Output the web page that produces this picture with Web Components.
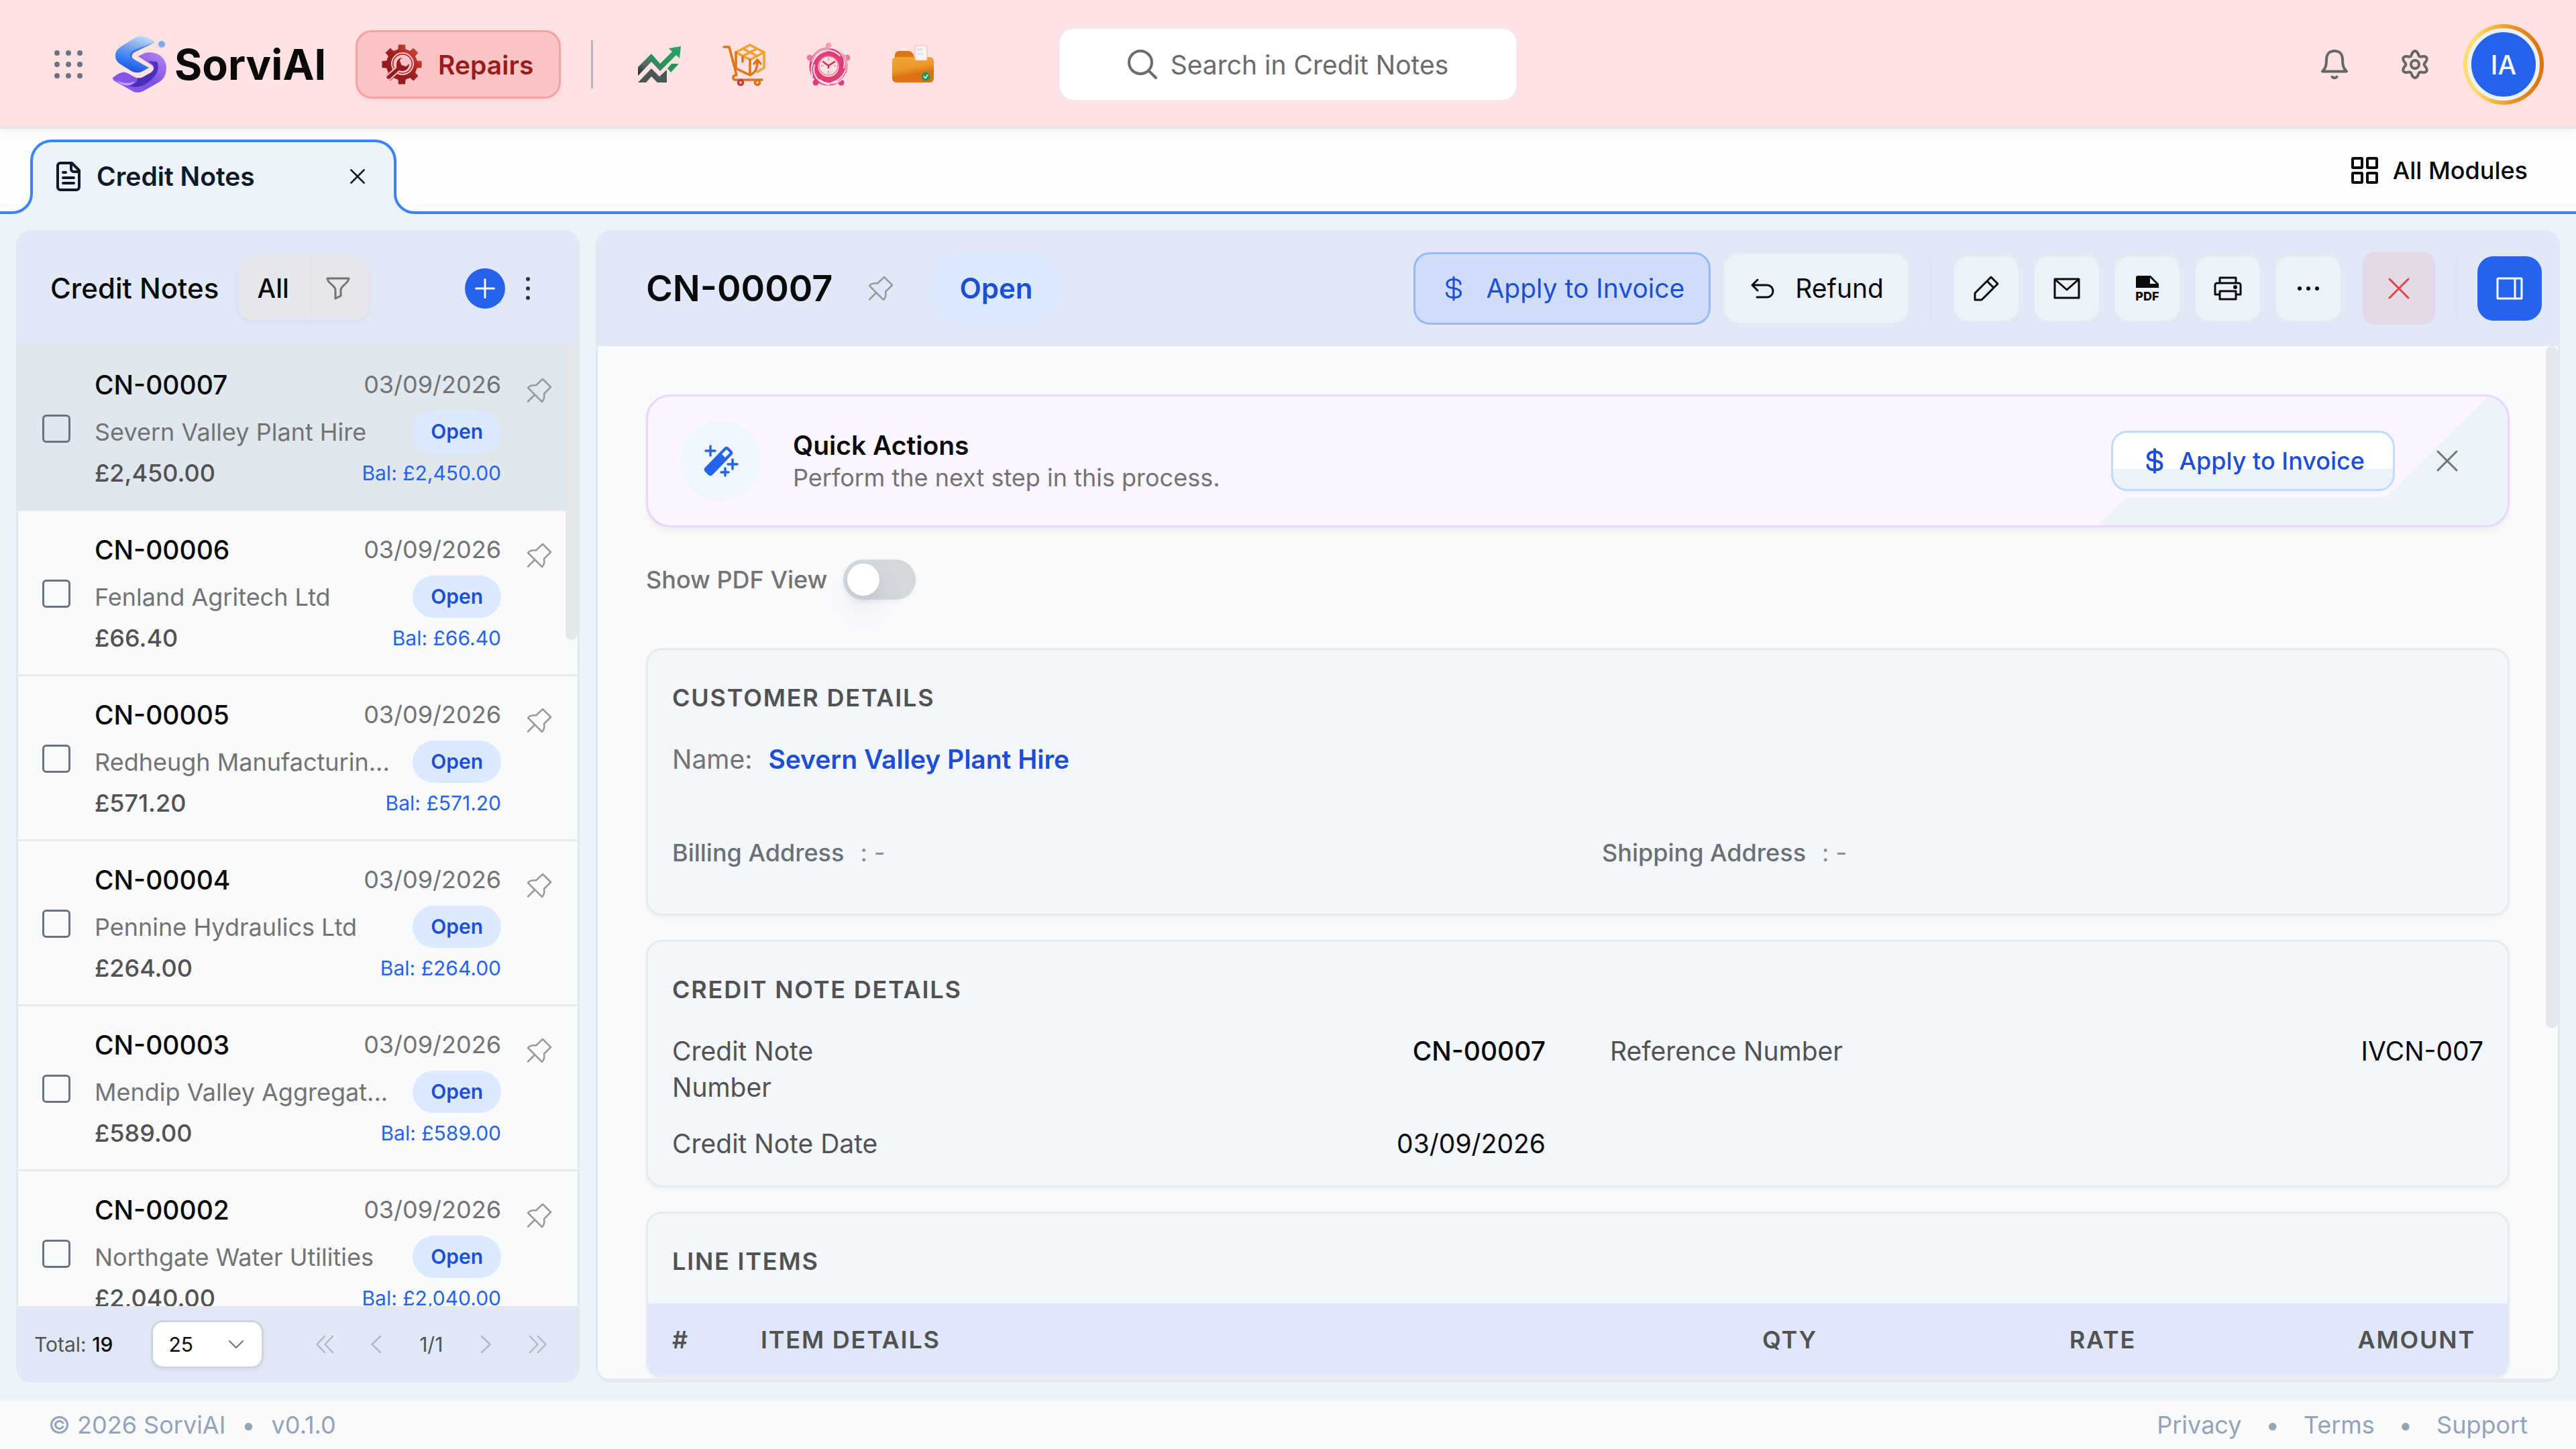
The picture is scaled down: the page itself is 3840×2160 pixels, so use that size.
<!DOCTYPE html>
<html lang="en">
<head>
<meta charset="utf-8">
<title>Credit Notes · SorviAI</title>
<style>
  html, body { margin: 0; height: 100%; }
  body { font-family: Inter, "Liberation Sans", sans-serif; color: #0a0a0a; background: #ebf2fa; overflow: hidden; }
</style>
</head>
<body>
<sorvi-app></sorvi-app>

<script>
/* Outline path for a gear: lobes around a centre, as a smooth polar curve. */
function lobes(cx, cy, mid, amp) {
  let d = '';
  for (let i = 0; i < 120; i++) {
    const a = i / 120 * Math.PI * 2;
    const r = mid + amp * Math.cos(6 * (a - Math.PI / 2));
    d += (i ? 'L' : 'M') + (cx + r * Math.cos(a)).toFixed(2) + ' ' + (cy + r * Math.sin(a)).toFixed(2);
  }
  return d + 'Z';
}
/* Outline of a toothed wheel with eight square teeth. */
function cog(cx, cy, inner, outer) {
  let d = '';
  for (let i = 0; i < 8; i++) {
    const c = i * Math.PI / 4;
    [[-0.24, inner], [-0.17, outer], [0.17, outer], [0.24, inner]].forEach(([o, r], k) => {
      d += (i || k ? 'L' : 'M') + (cx + r * Math.cos(c + o)).toFixed(2) + ' ' + (cy + r * Math.sin(c + o)).toFixed(2);
    });
  }
  return d + 'Z';
}

/* name: [width, height, markup, stroke width] */
const ICONS = {
  dots: [42, 42, [4, 21, 38].map(y => [4, 21, 38].map(x => `<circle cx="${x}" cy="${y}" r="4" fill="currentColor" stroke="none"/>`).join('')).join(''), 0],
  search: [44, 44, '<circle cx="19" cy="19" r="17"/><path d="M31.5 31.5 42 42"/>', 4],
  bell: [40, 44, '<path d="M20 2C11.500 2 8 8 8 15 8 24 6.500 28 2 32.500H38C33.500 28 32 24 32 15 32 8 28.500 2 20 2Z"/><path d="M16.500 40.500q3.500 3.500 7 0"/>', 4],
  settings: [40, 44, `<path d="${lobes(20, 22, 16.8, 3.2)}"/><circle cx="20" cy="22" r="6"/>`, 4],
  doc: [36, 44, '<path d="M6 2H23L34 13V38a4 4 0 0 1-4 4H6a4 4 0 0 1-4-4V6a4 4 0 0 1 4-4Z"/><path d="M22 2v9a4 4 0 0 0 4 4h8M10 16h4M10 24h16M10 32h16"/>', 4],
  close: [32, 32, '<path d="M2 2 30 30M30 2 2 30"/>', 3],
  grid: [40, 40, '<rect x="2" y="2" width="14" height="14" rx="1"/><rect x="24" y="2" width="14" height="14" rx="1"/><rect x="2" y="24" width="14" height="14" rx="1"/><rect x="24" y="24" width="14" height="14" rx="1"/>', 4],
  filter: [36, 34, '<path d="M2 2H34C34 9 22 13 22 19V28L14 32V19C14 13 2 9 2 2Z"/>', 3],
  plus: [30, 30, '<path d="M15 1.500V28.500M1.500 15H28.500"/>', 3],
  kebab: [8, 36, '<g fill="currentColor" stroke="none"><circle cx="4" cy="4" r="3"/><circle cx="4" cy="18" r="3"/><circle cx="4" cy="32" r="3"/></g>', 0],
  more: [34, 8, '<g fill="currentColor" stroke="none"><circle cx="4" cy="4" r="3"/><circle cx="17" cy="4" r="3"/><circle cx="30" cy="4" r="3"/></g>', 0],
  pin: [38, 38, '<path d="M24 2 36 14 26 24C27 29 26 33 23 36L2 15C5 11.500 9.500 11 14 11.500ZM12 25.500 2 35.500"/>', 2.5],
  dollar: [24, 36, '<path d="M12 1V35M22 11.500C22 7 18 4.500 12 4.500S2 7 2 11.500 6 17 12 17.800 22.500 20.500 22.500 25 18 31.500 12 31.500 1.500 29 1.500 24.500"/>', 3],
  undo: [36, 30, '<path d="M10 2 2 10 10 18M2 10H24a9 9 0 0 1 0 18H9"/>', 3],
  pencil: [38, 38, '<path d="M26 2 36 12 12 36H2V26ZM20 8 30 18"/>', 3],
  mail: [40, 32, '<path d="M2 2H38V30H2ZM3 3 20 18 37 3"/>', 3],
  printer: [42, 36, '<path d="M9 10V2H33V10M9 27H2V13a3 3 0 0 1 3-3H37a3 3 0 0 1 3 3V27H33M9 22H33V34H9Z"/><circle cx="32" cy="16" r="1.500" fill="currentColor"/>', 3],
  pdf: [36, 38, '<path d="M4 0H23L35 12V18H1V3a3 3 0 0 1 3-3Z" fill="currentColor" stroke="none"/><path d="M22 3V12H31Z" fill="#ebf2fa" stroke="none"/><text x="18" y="37" text-anchor="middle" font-family="Inter" font-size="18" font-weight="800" fill="currentColor" stroke="none">PDF</text>', 0],
  panel: [40, 34, '<rect x="2" y="2" width="36" height="30" rx="1"/><path d="M28 2V32"/>', 3],
  wand: [52, 46, '<path d="M32 3a4 4 0 0 1 6 0l5 5a4 4 0 0 1 0 6L14 44a4 4 0 0 1-6 0L3 39a4 4 0 0 1 0-6Z" fill="currentColor" stroke="none"/><path d="M28 13 35 6 40 11 33 18Z" fill="#eff6ff" stroke="none"/><path d="M11 1V15M4 8H18M44 21V35M37 28H51M33 34V45M27 40H38"/>', 3.5],
  chevdown: [22, 12, '<path d="M1 1 11 11 21 1"/>', 2],
  first: [26, 26, '<path d="M13 1 1.500 13 13 25M25 1 13.500 13 25 25"/>', 2.5],
  prev: [15, 26, '<path d="M14 1 1.500 13 14 25"/>', 2.5],
  next: [15, 26, '<path d="M1 1 13.500 13 1 25"/>', 2.5],
  last: [26, 26, '<path d="M1 1 12.500 13 1 25M13 1 24.500 13 13 25"/>', 2.5],
  logo: [80, 84, `<defs>
      <linearGradient id="b" x1=".7" y1="0" x2=".4" y2="1"><stop offset="0" stop-color="#bfdbfe"/><stop offset=".35" stop-color="#7aa5ee"/><stop offset=".65" stop-color="#3b82f6"/><stop offset="1" stop-color="#1d4ed8"/></linearGradient>
      <linearGradient id="p" x1="1" y1="0" x2="0" y2="1"><stop offset="0" stop-color="#b48af5"/><stop offset=".5" stop-color="#7c4fe0"/><stop offset="1" stop-color="#8b5cf6"/></linearGradient></defs>
      <g stroke="none"><path d="M38 30C44 27 48 24 54 24 70 24 80 34 80 47 80 57 76 65 68 69L47 81C41 84.500 34 85 28 81L3 67C1 66 0 64 0 62 6 57 14 51 22 55L33 61C40 64 46 61 50 58L57 54C62 50 62 46 58 43Z" fill="url(#p)"/>
      <path d="M60 43C63 48 61 52 56 55L50 58C46 61 42 63 37 62.500 38 68 31 73 24 74 38 78 48 73 56 66 65 59 71 48 66 38L53 37Z" fill="#4326b0" opacity=".85"/>
      <path d="M3 64C12 70 24 72 33 67 30 73 20 75 12 71Z" fill="#c4a5fb"/>
      <path d="M63 9C58 4 50 0 42 0 38 0 35 1.500 32 3L13 15C7 19 4 23 4 29 4 35 7 39 12 42L28 52C34 55 40 55 45 52L54 47 31 34C27 31 28 27 32 24Z" fill="url(#b)"/>
      <path d="M63 9 32 24C28 27 27 31 31 34L33 36C27 34 23 28 28 23 30 21 33 20 36 19Z" fill="#2563eb" opacity=".7"/>
      <circle cx="73" cy="12" r="5" fill="#7aaaf5"/></g>`, 0],
  repair: [60, 60, `<defs><linearGradient id="r" x1="1" y1="0" x2="0" y2="1"><stop offset="0" stop-color="#d9573f"/><stop offset=".45" stop-color="#a32121"/><stop offset=".8" stop-color="#8e1a1e"/><stop offset="1" stop-color="#4a3b40"/></linearGradient></defs>
      <g stroke="none"><path d="${cog(30, 30, 23.5, 30)}" fill="url(#r)"/><circle cx="31" cy="29" r="17" fill="#fbc4c4"/><circle cx="31" cy="29" r="15" fill="#a02024"/>
      <circle cx="31" cy="29" r="13.500" fill="#fbc4c4"/><path d="M33 18C26 19 21 23 21 29 21 32 21.500 33 21 35L7 47C5 51 9 54 13 52L26 40C34 43 43 38 42 27L36 32 30 30 28 24Z" fill="#97191d" stroke="#fbc4c4" stroke-width="2"/></g>`, 0],
  sales: [66, 56, `<defs><linearGradient id="s" x1="0" y1="1" x2="1" y2="0"><stop offset="0" stop-color="#1f2937"/><stop offset=".3" stop-color="#5b6b66"/><stop offset=".5" stop-color="#23955c"/><stop offset="1" stop-color="#2ba367"/></linearGradient></defs>
      <g stroke="none"><path d="M1 32 21 12 34 27 52 9 47 4 65 1 63 19 58 14 34 38 21 24 1 45Z" fill="url(#s)"/><path d="M1 55 21 34 33 46 44 36V55H30L21 46 13 55Z" fill="#4b5558"/><path d="M45 34 51 27H62L50 40Z" fill="#23955c"/></g>`, 0],
  cart: [64, 62, `<path d="M2 5H10L21 47C15 47 14 53 19 54H59" stroke="#dd7413"/><g stroke="#efa12d"><path d="M41 2 62 13V36L52 42M41 2 20 13 41 24 62 13M30.500 7.500 51.500 18.500M51.500 7.500 30.500 18.500"/></g><path d="M20 13V37L41 47C49 43 52 38 52 26M41 24V46M47 30 52 24 57 30M30 20V27" stroke="#dd7413"/><circle cx="27" cy="58" r="3.500" stroke="#c93a3a"/><circle cx="52" cy="58" r="3.500" stroke="#dd7413"/>`, 3.5],
  clock: [66, 66, `<g stroke="none" fill="#e77d99"><circle cx="33" cy="5" r="4.500" fill="#f3a1ab"/><circle cx="5" cy="23" r="4.500"/><circle cx="61" cy="23" r="4.500"/><circle cx="14" cy="60" r="4.500" fill="#e23b7a"/><circle cx="52" cy="60" r="4.500" fill="#e23b7a"/></g>
      <circle cx="33" cy="36" r="22" stroke="#e23b7a" stroke-width="13"/><g stroke="#fee2e2" stroke-width="2"><path d="M33 8C50 8 60 22 56 38M58 22C64 40 54 56 38 60M60 46C52 62 34 66 20 56M34 63C18 62 8 48 12 34M9 50C4 32 14 16 30 13M10 24C20 10 38 8 50 20"/></g>
      <path d="M8 28C12 16 22 9 34 9M56 22C60 28 61 36 59 43" stroke="#f09ab0" stroke-width="3"/><circle cx="33" cy="35" r="14" fill="#fee2e2" stroke="#e58a9c" stroke-width="1.500"/><path d="M25 29 33 35 42 29M33 35V38" stroke="#d02b55" stroke-width="2.500"/>
      <path d="M33 24v3M33 43v3M22 35h3M41 35h3" stroke="#e58a9c" stroke-width="1.500"/>`, 2],
  folder: [64, 58, `<defs><linearGradient id="f" x1="0" y1="0" x2=".3" y2="1"><stop offset="0" stop-color="#f0a535"/><stop offset=".5" stop-color="#ec9a2a"/><stop offset=".75" stop-color="#dd7413"/></linearGradient></defs>
      <g stroke="none"><path d="M5 22V15C5 11 8 9 12 9H25C30 9 33 13 34 19Z" fill="#dd7413"/><rect x="1" y="18" width="62" height="38" rx="6" fill="url(#f)"/><rect x="35" y="1" width="18" height="22" rx="2" fill="#fdf4ec" stroke="#f6b9b0" stroke-width="1"/><path d="M38 5h8v4h-8ZM38 12h10v3h-10Z" fill="#dbe7f0"/><circle cx="51" cy="47" r="6.500" fill="#23955c"/></g><path d="M48 47 50.500 49.500 54 44.500" stroke="#fff" stroke-width="1.500"/>`, 0]
};

function define(name, html, setup) {
  const tpl = document.createElement('template');
  tpl.innerHTML = '<style>*{box-sizing:border-box}button,input,select{font:inherit;color:inherit;margin:0}button{cursor:pointer}a{text-decoration:none;color:inherit}</style>' + html;
  customElements.define(name, class extends HTMLElement {
    connectedCallback() {
      if (this.shadowRoot) return;
      this.attachShadow({ mode: 'open' }).append(tpl.content.cloneNode(true));
      if (setup) setup(this, this.shadowRoot);
    }
  });
}

define('sv-icon', '<style>:host{display:block;flex:none}span,svg{display:block;overflow:visible}</style><span></span>', (el, root) => {
  const [w, h, body, sw] = ICONS[el.getAttribute('name')];
  const scale = Number(el.getAttribute('scale') || 1);
  const stroke = el.getAttribute('weight') || sw;
  root.querySelector('span').innerHTML =
    `<svg aria-hidden="true" width="${Math.round(w * scale)}" height="${Math.round(h * scale)}" viewBox="0 0 ${w} ${h}" fill="none" stroke="currentColor" stroke-width="${stroke}" stroke-linecap="round" stroke-linejoin="round">${body}</svg>`;
});

define('sv-button', `
<style>
  :host { display: block; flex: none; }
  button { display: flex; align-items: center; justify-content: center; gap: 24px; width: 100%; height: 102px; padding: 0; border: 3px solid transparent; border-radius: 24px; background: none; font-size: 39px; font-weight: 400; white-space: nowrap; }
  :host([kind=soft]) button { width: 102px; background: #ebf2fa; border-color: #e6eaee; }
  :host([kind=soft][wide]) button { width: auto; height: 108px; padding: 0 36px 0 39px; gap: 30px; }
  :host([kind=primary]) button { height: 108px; padding: 0 36px 0 45px; gap: 36px; background: #cfddf8; border-color: #97b7f6; color: #1d4ed8; }
  :host([kind=danger]) button { width: 108px; height: 108px; border-radius: 18px; background: #e4d9e6; color: #dc4444; }
  :host([kind=blue]) button { width: 96px; height: 96px; background: #2563eb; color: #fff; }
  :host([kind=outline]) button { height: 90px; padding: 0 42px 0 50px; gap: 24px; border-color: #bfdbfe; background: linear-gradient(#fff 64%, #ebf2fa 64%); color: #1d4ed8; font-size: 36px; font-weight: 500; }
  :host([kind=round]) button { width: 60px; height: 60px; border: 0; border-radius: 50%; background: #2563eb; color: #fff; }
  :host([kind=app]) button { height: 102px; padding: 0 38px 0 36px; gap: 24px; background: #fbc4c4; border-color: #f4a1a1; color: #991b1b; font-weight: 600; box-shadow: 0 3px 6px rgba(200,80,80,.08); }
  :host([kind=plain]) button { height: 96px; border: 0; }
</style>
<button type="button"><slot></slot></button>`, (el, root) => {
  if (el.hasAttribute('label')) root.querySelector('button').setAttribute('aria-label', el.getAttribute('label'));
});

define('sv-header', `
<style>
  :host { display: grid; grid-template-columns: 1fr 686px 1fr; align-items: center; height: 192px; flex: none; padding: 3px 48px 0; background: #fee2e2; border-bottom: 3px solid #e5e7eb; box-shadow: 0 3px 9px rgba(0,0,0,.05); box-sizing: border-box; position: relative; }
  .left, .right, .brand, .apps { display: flex; align-items: center; }
  .launch { width: 108px; color: #6b7280; margin-right: 12px; }
  .brand { gap: 12px; font-size: 63px; font-weight: 700; line-height: 84px; margin-right: 44px; }
  .rule { width: 3px; height: 72px; background: #b3b6bd; margin: 0 36px 0 45px; }
  .apps sv-button { width: 126px; }
  .search { display: flex; align-items: center; justify-content: center; gap: 20px; height: 112px; border: 3px solid #f3e9ec; border-radius: 24px; background: #fff; color: #6b6b6b; font-size: 39px; }
  input { field-sizing: content; border: 0; outline: 0; padding: 0; background: none; }
  input::placeholder { color: #6b6b6b; opacity: 1; }
  .right { justify-content: flex-end; gap: 24px; color: #666; }
  .right sv-button { width: 96px; }
  .ring { width: 120px; height: 120px; padding: 6px; border-radius: 50%; background: linear-gradient(90deg, #fddc70 15%, #f0a22e 50%, #dd7511 92%); }
  .ring button { display: block; width: 108px; height: 108px; padding: 0; border: 6px solid #ebf2fa; border-radius: 50%; background: #2563eb; color: #f8fafc; font-size: 39px; font-weight: 500; }
</style>
<div class="left">
  <sv-button kind="plain" class="launch" label="Apps"><sv-icon name="dots"></sv-icon></sv-button>
  <a class="brand" href="#"><sv-icon name="logo"></sv-icon><span>SorviAI</span></a>
  <sv-button kind="app"><sv-icon name="repair"></sv-icon><span>Repairs</span></sv-button>
  <div class="rule"></div>
  <nav class="apps">
    <sv-button kind="plain" label="Sales"><sv-icon name="sales"></sv-icon></sv-button>
    <sv-button kind="plain" label="Purchases"><sv-icon name="cart"></sv-icon></sv-button>
    <sv-button kind="plain" label="Time"><sv-icon name="clock"></sv-icon></sv-button>
    <sv-button kind="plain" label="Documents"><sv-icon name="folder"></sv-icon></sv-button>
  </nav>
</div>
<label class="search"><sv-icon name="search"></sv-icon><input type="text" aria-label="Search in Credit Notes" placeholder="Search in Credit Notes"></label>
<div class="right">
  <sv-button kind="plain" label="Notifications"><sv-icon name="bell"></sv-icon></sv-button>
  <sv-button kind="plain" label="Settings"><sv-icon name="settings"></sv-icon></sv-button>
  <div class="ring"><button type="button">IA</button></div>
</div>`);

define('sv-tabs', `
<style>
  :host { display: flex; align-items: flex-end; height: 127px; flex: none; background: #fcfdff; }
  .line { align-self: stretch; border-bottom: 4px solid #3b82f6; }
  .lead { width: 18px; }
  .fill { flex: 1; display: flex; align-items: center; justify-content: flex-end; padding-right: 72px; }
  svg { display: block; flex: none; }
  .tab { display: flex; align-items: center; height: 111px; width: 484px; padding-bottom: 6px; background: #ebf2fa; border-top: 4px solid #3b82f6; box-sizing: border-box; font-size: 39px; font-weight: 600; color: #111827; }
  .tab a { display: flex; align-items: center; gap: 24px; flex: 1; padding-left: 8px; }
  .tab button { border: 0; background: none; padding: 0 16px; }
  .mods { display: flex; align-items: center; gap: 22px; font-size: 36px; font-weight: 500; }
</style>
<div class="line lead"></div>
<svg width="58" height="111" viewBox="0 0 58 111"><path d="M0 109A28 28 0 0 0 29 81V32A30 30 0 0 1 58 2V111H0Z" fill="#ebf2fa"/><path d="M0 109A29 28 0 0 0 29 81V32A30 30 0 0 1 58 2" fill="none" stroke="#3b82f6" stroke-width="4"/></svg>
<div class="tab"><a href="#"><sv-icon name="doc"></sv-icon><span>Credit Notes</span></a><button type="button" aria-label="Close tab"><sv-icon name="close" scale=".7" weight="4"></sv-icon></button></div>
<svg width="58" height="111" viewBox="0 0 58 111"><path d="M58 109A28 28 0 0 1 29 81V32A30 30 0 0 0 0 2V111H58Z" fill="#ebf2fa"/><path d="M58 109A29 28 0 0 1 29 81V32A30 30 0 0 0 0 2" fill="none" stroke="#3b82f6" stroke-width="4"/></svg>
<div class="line fill"><a class="mods" href="#"><sv-icon name="grid"></sv-icon><span>All Modules</span></a></div>`);

define('sv-note', `
<style>
  :host { display: flex; height: 246px; padding: 3px 36px 0; gap: 36px; border-bottom: 3px solid #e7e9eb; background: #f9fafc; box-sizing: border-box; }
  :host([selected]) { background: #e1e7ef; }
  input { appearance: none; flex: none; align-self: center; width: 42px; height: 42px; border: 3px solid #6b7280; border-radius: 6px; }
  .body { width: 606px; padding-top: 27px; }
  .row { display: flex; align-items: center; justify-content: space-between; white-space: nowrap; }
  .top { height: 54px; margin-bottom: 12px; font-size: 39px; font-weight: 500; }
  .mid { height: 63px; margin-bottom: 7px; }
  .low { height: 45px; }
  time, .name { font-size: 36px; font-weight: 400; color: #737373; }
  .name { max-width: 450px; overflow: hidden; text-overflow: ellipsis; }
  .pill { height: 63px; padding: 0 27px; border-radius: 32px; background: #dbeafe; color: #1d4ed8; font-size: 30px; font-weight: 600; line-height: 63px; }
  .sum { font-size: 36px; font-weight: 500; color: #525252; }
  .bal { font-size: 30px; color: #2563eb; }
  .pin { align-self: flex-start; margin: 44px 0 0 2px; padding: 0; border: 0; background: none; color: #9a9a9a; }
</style>
<input type="checkbox">
<div class="body">
  <div class="row top"><span class="num"></span><time></time></div>
  <div class="row mid"><span class="name"></span><span class="pill">Open</span></div>
  <div class="row low"><span class="sum"></span><span class="bal"></span></div>
</div>
<button class="pin" type="button" aria-label="Pin"><sv-icon name="pin"></sv-icon></button>`, (el, root) => {
  const put = (sel, text) => { root.querySelector(sel).textContent = text; };
  put('.num', el.getAttribute('num'));
  put('time', el.getAttribute('date'));
  put('.name', el.getAttribute('customer'));
  put('.sum', el.getAttribute('total'));
  put('.bal', 'Bal: ' + el.getAttribute('total'));
  root.querySelector('input').setAttribute('aria-label', 'Select ' + el.getAttribute('num'));
});

define('sv-list', `
<style>
  :host { display: flex; flex-direction: column; width: 840px; flex: none; border: 3px solid #e4e8ee; border-radius: 24px; overflow: hidden; background: #f9fafc; box-sizing: border-box; }
  header { display: flex; align-items: center; height: 170px; flex: none; padding: 0 64px 0 48px; background: #e1e8f8; border-bottom: 3px solid #e5e7eb; }
  h2 { margin: 0 28px 0 0; font-size: 42px; font-weight: 500; }
  .seg { display: flex; height: 96px; border: 3px solid #e6e8ea; border-radius: 24px; background: #e5e7eb; box-shadow: 0 3px 6px rgba(60,90,160,.06); margin-right: auto; overflow: hidden; }
  .seg button { display: flex; align-items: center; justify-content: center; width: 100px; padding: 0; border: 0; background: none; font-size: 39px; font-weight: 500; color: #0a0a0a; }
  .seg button + button { width: 90px; border-left: 3px solid #e9eaec; color: #737373; }
  .kebab { width: 48px; margin: 0 -14px 0 10px; color: #333; }
  .scroll { flex: 1; min-height: 0; overflow: hidden; position: relative; }
  .thumb { position: absolute; right: 0; top: 0; width: 18px; height: 438px; border-radius: 0 0 9px 9px; background: #e5e7eb; }
  footer { display: flex; align-items: center; height: 111px; flex: none; padding: 0 46px 0 24px; background: #e1e8f8; border-top: 3px solid #e5e7eb; font-size: 30px; color: #525252; }
  b { font-weight: 500; color: #0a0a0a; }
  .size { display: grid; align-items: center; margin: 0 48px 0 56px; }
  .size > * { grid-area: 1 / 1; }
  select { appearance: none; width: 168px; height: 72px; padding: 0 24px; border: 3px solid #d1d5db; border-radius: 18px; background: #fff; color: #0a0a0a; box-shadow: 0 3px 6px rgba(0,0,0,.05); }
  .size sv-icon { justify-self: end; margin-right: 30px; color: #737373; pointer-events: none; }
  .pager { display: flex; flex: 1; align-items: center; justify-content: space-between; padding-left: 30px; }
  .pager button { display: grid; place-items: center; border: 0; background: none; padding: 0; color: #b3b7c2; }
</style>
<header>
  <h2>Credit Notes</h2>
  <div class="seg"><button type="button">All</button><button type="button" aria-label="Filter"><sv-icon name="filter"></sv-icon></button></div>
  <sv-button kind="round" label="New"><sv-icon name="plus"></sv-icon></sv-button>
  <sv-button kind="plain" class="kebab" label="More"><sv-icon name="kebab"></sv-icon></sv-button>
</header>
<div class="scroll">
  <sv-note selected num="CN-00007" date="03/09/2026" customer="Severn Valley Plant Hire" total="£2,450.00"></sv-note>
  <sv-note num="CN-00006" date="03/09/2026" customer="Fenland Agritech Ltd" total="£66.40"></sv-note>
  <sv-note num="CN-00005" date="03/09/2026" customer="Redheugh Manufacturin..." total="£571.20"></sv-note>
  <sv-note num="CN-00004" date="03/09/2026" customer="Pennine Hydraulics Ltd" total="£264.00"></sv-note>
  <sv-note num="CN-00003" date="03/09/2026" customer="Mendip Valley Aggregat..." total="£589.00"></sv-note>
  <sv-note num="CN-00002" date="03/09/2026" customer="Northgate Water Utilities" total="£2,040.00"></sv-note>
  <div class="thumb"></div>
</div>
<footer>
  <span>Total: <b>19</b></span>
  <div class="size"><select aria-label="Rows per page"><option>25</option></select><sv-icon name="chevdown"></sv-icon></div>
  <div class="pager">
    <button type="button" aria-label="First page"><sv-icon name="first"></sv-icon></button>
    <button type="button" aria-label="Previous page"><sv-icon name="prev"></sv-icon></button>
    <span>1/1</span>
    <button type="button" aria-label="Next page"><sv-icon name="next"></sv-icon></button>
    <button type="button" aria-label="Last page"><sv-icon name="last"></sv-icon></button>
  </div>
</footer>`);

define('sv-card', `
<style>
  :host { display: block; flex: none; border: 3px solid #e6eaed; border-radius: 24px; background: #f3f6fb; box-shadow: 0 3px 6px rgba(0,0,0,.05); overflow: hidden; box-sizing: border-box; }
  h3 { margin: 0; padding: 48px 36px 40px; font-size: 36px; font-weight: 600; line-height: 46px; letter-spacing: .05em; color: #525252; }
</style>
<h3></h3><slot></slot>`, (el, root) => { root.querySelector('h3').textContent = el.getAttribute('heading'); });

define('sv-quick', `
<style>
  :host { display: flex; align-items: center; height: 198px; flex: none; padding: 0 48px; border: 3px solid #e9d5ff; border-radius: 36px; background: #faf5ff; box-shadow: 0 6px 9px rgba(0,0,0,.05); overflow: hidden; box-sizing: border-box; position: relative; }
  .shade { position: absolute; right: 0; top: 0; }
  .disc { display: grid; place-items: center; width: 120px; height: 120px; margin-right: 48px; border-radius: 50%; background: #eff6ff; color: #2563eb; }
  .copy { flex: 1; padding-top: 2px; }
  h4, p { margin: 0; line-height: 48px; }
  h4 { font-size: 39px; font-weight: 600; }
  p { font-size: 36px; color: #737373; }
  sv-button { position: relative; }
  .x { position: relative; width: 60px; margin: 0 12px 0 48px; color: #737373; }
</style>
<svg class="shade" width="612" height="192" viewBox="0 0 612 192"><path d="M583 0 432 150H44L2 192H612V0Z" fill="#ebf2fa"/></svg>
<div class="disc"><sv-icon name="wand"></sv-icon></div>
<div class="copy"><h4>Quick Actions</h4><p>Perform the next step in this process.</p></div>
<sv-button kind="outline"><sv-icon name="dollar" weight="4"></sv-icon><span>Apply to Invoice</span></sv-button>
<sv-button kind="plain" class="x" label="Dismiss"><sv-icon name="close"></sv-icon></sv-button>`);

define('sv-detail', `
<style>
  :host { display: flex; flex-direction: column; flex: 1; min-width: 0; border: 3px solid #e4e8ee; border-radius: 24px; overflow: hidden; background: #f9fafc; box-sizing: border-box; }
  header { display: flex; align-items: center; gap: 18px; height: 170px; flex: none; padding: 0 24px 0 72px; background: #e1e8f8; border-bottom: 3px solid #e5e7eb; }
  h1 { margin: 0; font-size: 54px; font-weight: 600; }
  .pin { width: 84px; margin-left: 12px; color: #9a9a9a; }
  .pill { height: 102px; padding: 0 45px; margin-left: 12px; margin-right: auto; border-radius: 51px; background: #dbeafe; color: #1d4ed8; font-size: 42px; font-weight: 600; line-height: 102px; }
  .rule { width: 3px; height: 96px; margin: 0 12px; background: #e0e5f2; }
  .kill { margin-left: 12px; }
  .scroll { display: flex; flex-direction: column; flex: 1; min-height: 0; overflow: hidden; position: relative; padding: 72px 72px 0; border-bottom: 3px solid #e5e9ec; }
  .thumb { position: absolute; right: 0; top: 0; width: 18px; height: 1017px; border-radius: 9px; background: #e5e7eb; }
  .toggle { display: flex; align-items: center; align-self: flex-start; gap: 24px; height: 60px; margin: 48px 0 72px; flex: none; font-size: 36px; font-weight: 500; color: #737373; }
  .toggle input { appearance: none; width: 108px; height: 60px; margin: 0; padding: 6px; border-radius: 30px; background: #d4d7dc; box-shadow: 0 3px 6px rgba(0,0,0,.05); }
  .toggle input::before { content: ""; display: block; width: 48px; height: 48px; border-radius: 50%; background: #fff; box-shadow: 0 24px 36px rgba(100,116,160,.1), 0 9px 12px rgba(100,116,160,.08); }
  sv-card { margin-top: 36px; font-size: 39px; line-height: 54px; }
  .toggle + sv-card { margin-top: 0; }
  .who { display: flex; gap: 24px; padding: 2px 36px 0; color: #737373; }
  .who a { font-weight: 600; color: #1d4ed8; }
  .addr { display: grid; grid-template-columns: 1fr 1fr; gap: 72px; padding: 85px 36px 64px; font-size: 36px; color: #8a8d93; }
  .addr b { margin-right: 24px; font-weight: 500; color: #6b7075; }
  .pairs { display: grid; grid-template-columns: 1fr 1fr; column-gap: 96px; row-gap: 30px; padding: 2px 36px 35px; }
  .pairs div { display: flex; justify-content: space-between; }
  .pairs span { flex: 0 0 28%; color: #525252; }
  .pairs strong { font-weight: 500; }
  .pairs em { font-style: normal; }
  table { width: 100%; border-collapse: collapse; table-layout: fixed; }
  th { height: 108px; padding: 0 48px 0 0; background: #dfe7f8; font-size: 36px; font-weight: 600; letter-spacing: .05em; text-align: right; color: #525252; }
  th.l { text-align: left; padding-left: 36px; padding-right: 0; }
  .idx { width: 132px; }
  .qty, .rate { width: 475px; }
  .amt { width: 506px; }
</style>
<header>
  <h1>CN-00007</h1>
  <sv-button kind="plain" class="pin" label="Pin"><sv-icon name="pin"></sv-icon></sv-button>
  <span class="pill">Open</span>
  <sv-button kind="primary"><sv-icon name="dollar"></sv-icon><span>Apply to Invoice</span></sv-button>
  <sv-button kind="soft" wide><sv-icon name="undo"></sv-icon><span>Refund</span></sv-button>
  <div class="rule"></div>
  <sv-button kind="soft" label="Edit"><sv-icon name="pencil"></sv-icon></sv-button>
  <sv-button kind="soft" label="Email"><sv-icon name="mail"></sv-icon></sv-button>
  <sv-button kind="soft" label="Download"><sv-icon name="pdf"></sv-icon></sv-button>
  <sv-button kind="soft" label="Print"><sv-icon name="printer"></sv-icon></sv-button>
  <sv-button kind="soft" label="More"><sv-icon name="more"></sv-icon></sv-button>
  <sv-button kind="danger" class="kill" label="Close"><sv-icon name="close"></sv-icon></sv-button>
  <div class="rule"></div>
  <sv-button kind="blue" label="Toggle side panel"><sv-icon name="panel"></sv-icon></sv-button>
</header>
<div class="scroll">
  <sv-quick></sv-quick>
  <label class="toggle"><span>Show PDF View</span><input type="checkbox" role="switch"></label>
  <sv-card heading="CUSTOMER DETAILS">
    <div class="who"><span>Name:</span><a href="#">Severn Valley Plant Hire</a></div>
    <div class="addr"><div><b>Billing Address</b>: -</div><div><b>Shipping Address</b>: -</div></div>
  </sv-card>
  <sv-card heading="CREDIT NOTE DETAILS">
    <div class="pairs">
      <div><span>Credit Note Number</span><strong>CN-00007</strong></div>
      <div><span>Reference Number</span><em>IVCN-007</em></div>
      <div><span>Credit Note Date</span><time>03/09/2026</time></div>
    </div>
  </sv-card>
  <sv-card heading="LINE ITEMS">
    <table>
      <colgroup><col class="idx"><col><col class="qty"><col class="rate"><col class="amt"></colgroup>
      <thead><tr><th class="l">#</th><th class="l">ITEM DETAILS</th><th>QTY</th><th>RATE</th><th>AMOUNT</th></tr></thead>
    </table>
  </sv-card>
  <div class="thumb"></div>
</div>`);

define('sv-footer', `
<style>
  :host { display: flex; justify-content: space-between; align-items: center; height: 75px; flex: none; padding: 0 72px; border-top: 3px solid #f3f5f8; background: #f9fafc; color: #94a3b8; font-size: 36px; box-sizing: border-box; }
  div, nav { display: flex; gap: 24px; }
  nav { gap: 36px; }
</style>
<div><span>© 2026 SorviAI</span><span>•</span><span>v0.1.0</span></div>
<nav><a href="#">Privacy</a><span>•</span><a href="#">Terms</a><span>•</span><a href="#">Support</a></nav>`);

define('sorvi-app', `
<style>
  :host { display: flex; flex-direction: column; height: 100vh; }
  main { display: flex; flex: 1; min-height: 0; gap: 24px; padding: 24px; }
</style>
<sv-header></sv-header>
<sv-tabs></sv-tabs>
<main><sv-list></sv-list><sv-detail></sv-detail></main>
<sv-footer></sv-footer>`);
</script>
</body>
</html>
